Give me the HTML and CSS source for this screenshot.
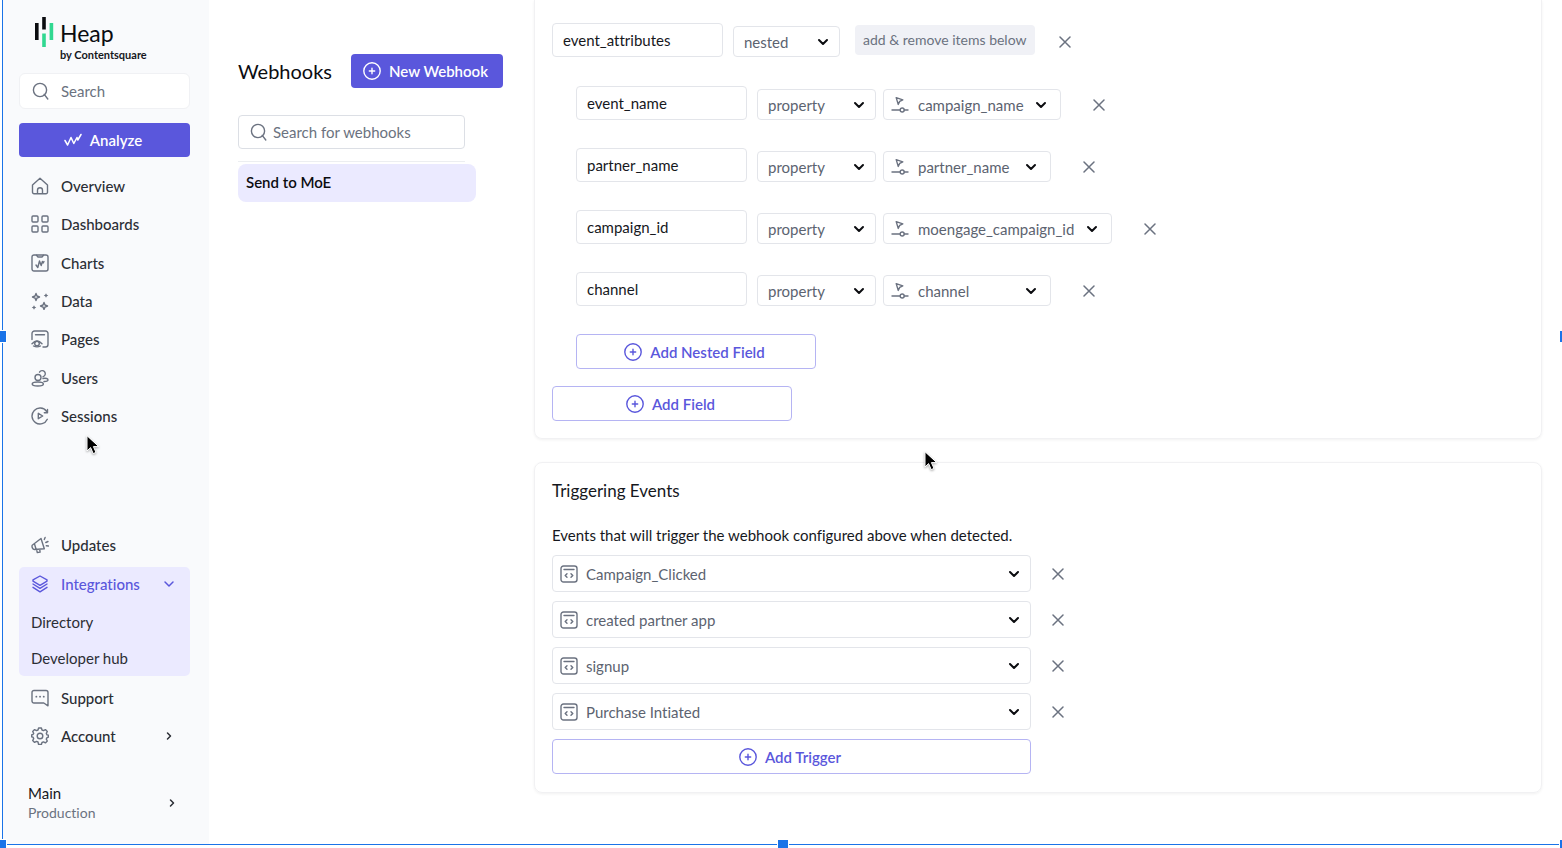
FILE: index.html
```html
<!DOCTYPE html>
<html lang="en">
<head>
<meta charset="utf-8">
<meta name="viewport" content="width=device-width, initial-scale=1">
<title>Heap – Webhooks</title>
<link rel="stylesheet" href="styles.css">
</head>
<body>
<svg class="sprite" aria-hidden="true">
  <symbol id="search" viewBox="0 0 18 18"><circle cx="8" cy="8" r="6.6"/><path d="M12.2 12.4 15.8 17"/></symbol>
  <symbol id="plus" viewBox="0 0 18 18"><circle cx="9" cy="9" r="8.2"/><path d="M9 6.300v5.400M6.300 9h5.400"/></symbol>
  <symbol id="chevron" viewBox="0 0 12 12"><path d="m2 4 4 4 4-4"/></symbol>
  <symbol id="chevron-right" viewBox="0 0 12 12"><path d="m4.500 3 3 3-3 3"/></symbol>
  <symbol id="close" viewBox="0 0 12 12"><path d="m1 1 10 10M11 1 1 11"/></symbol>
  <symbol id="property" viewBox="0 0 18 18"><path d="m5.200 1.600 6.600 2.200-3.100 1.600-1.500 3zM1 14h8.200M13.200 14h3.800"/><circle cx="11.200" cy="14" r="2"/></symbol>
  <symbol id="code" viewBox="0 0 18 18"><rect x="1" y="1" width="16" height="16" rx="2.500"/><path d="M4 4.500h10M7 8.700 5.200 10.500 7 12.300M11 8.700l1.800 1.800-1.800 1.800"/></symbol>
  <symbol id="pointer" viewBox="0 0 14 20"><path d="M1 1v15l3.600-3.400 2.600 6 2.800-1.200-2.600-5.800h5z"/></symbol>
</svg>

<div class="app">
  <aside class="sidebar">
    <div class="brand">
      <svg class="brand-mark" viewBox="0 0 20 32" aria-hidden="true"><path d="M1 7h3.600v17H1zM8.200 1h3.600v12.500H8.200z" fill="#0b0c10"/><path d="M8.200 17.500h3.600V31H8.200zM15.600 7h3.600v17h-3.600z" fill="#31d891"/></svg>
      <div class="brand-text"><span class="brand-name">Heap</span><span class="brand-by">by Contentsquare</span></div>
    </div>
    <label class="side-search"><svg class="icon"><use href="#search"/></svg><input type="search" placeholder="Search" aria-label="Search"></label>
    <button class="btn btn-primary analyze" type="button"><svg class="icon-analyze" viewBox="0 0 18 14" aria-hidden="true"><path d="m1 7.500 2.600 4.500L7 4.500l2.800 6L13 4.500l.8 2.500L17 1.500"/></svg>Analyze</button>

    <nav class="nav nav-main" aria-label="Main">
      <a class="nav-link" href="#overview"><svg class="icon" viewBox="0 0 18 18"><path d="M1.500 8 9 1.200 16.500 8v7.300a1.500 1.500 0 0 1-1.500 1.500H3a1.500 1.500 0 0 1-1.500-1.500zM6.500 16.800v-3.500a2.500 2.500 0 0 1 5 0v3.500"/></svg>Overview</a>
      <a class="nav-link" href="#dashboards"><svg class="icon" viewBox="0 0 18 18"><rect x="1" y="1" width="6" height="6" rx="1"/><rect x="11" y="1" width="6" height="6" rx="1"/><rect x="1" y="11" width="6" height="6" rx="1"/><rect x="11" y="11" width="6" height="6" rx="1"/></svg>Dashboards</a>
      <a class="nav-link" href="#charts"><svg class="icon" viewBox="0 0 18 18"><rect x="1" y="1" width="16" height="16" rx="2"/><path d="M5.500 1.200 7 3h4l1.500-1.800M5 11l1.800 2.500L8.500 7l1.700 4.500 1.200-4 .8 1.500L13 7.500"/></svg>Charts</a>
      <a class="nav-link" href="#data"><svg class="icon" viewBox="0 0 18 18"><path d="M5 1.500 6 4l2.500 1L6 6 5 8.500 4 6 1.500 5 4 4zM13 10.500l1 2.500 2.500 1-2.500 1-1 2.500-1-2.500-2.500-1 2.500-1z"/><path class="filled" d="m15 1.200.8 1.500 1.500.8-1.500.8-.8 1.500-.8-1.500-1.500-.8 1.500-.8zM3 13.200l.8 1.500 1.500.8-1.500.8-.8 1.500-.8-1.500-1.500-.8 1.500-.8z"/></svg>Data</a>
      <a class="nav-link" href="#pages"><svg class="icon" viewBox="0 0 18 18"><path d="M1 9.500V3.500A2.500 2.500 0 0 1 3.500 1h11A2.500 2.500 0 0 1 17 3.500v11a2.500 2.500 0 0 1-2.500 2.500H12M4.500 4.800h9M1 13.800q5-5.500 10 0M2.500 16q3.500 1.800 7 0"/><circle cx="6" cy="13.500" r="2.300"/></svg>Pages</a>
      <a class="nav-link" href="#users"><svg class="icon" viewBox="0 0 18 18"><circle cx="7" cy="8.500" r="3"/><path d="M8.500 3.200a3.100 3.100 0 1 1 3.600 4.500M12 9.500c3-.6 5 .2 5 1.500 0 1-1.500 1.600-4 1.500"/><ellipse cx="6.800" cy="15" rx="5.600" ry="2"/></svg>Users</a>
      <a class="nav-link" href="#sessions"><svg class="icon" viewBox="0 0 18 18"><path d="M15.500 4.300A8 8 0 1 0 16.300 12.300M16.500 2.500v3.200h-3.200M7.300 6.300v5.400l4.400-2.700z"/></svg>Sessions</a>
    </nav>

    <nav class="nav nav-more" aria-label="More">
      <a class="nav-link" href="#updates"><svg class="icon" viewBox="0 0 18 18"><path d="M1.200 9.200 10 2.500l3.300 10.300-9.800.7C1.500 13.300.6 10.700 1.200 9.200zM5.500 13.400l.8 3.100 2.800-.4-.4-2.900M3.500 8l1.500 5M13.300 3.500l.8-2M14.800 6.500l2.200-1M15.300 9.800l2.200.2"/></svg>Updates</a>
      <div class="nav-group">
        <a class="nav-link active" href="#integrations"><svg class="icon" viewBox="0 0 18 18"><path d="m9 1 7 3.800v1.400L9 10.300 2 6.200V4.800zM2 9l7 4.300L16 9M2 12.300l7 4.500 7-4.500"/></svg>Integrations<svg class="icon-sm caret"><use href="#chevron"/></svg></a>
        <a class="sub-link" href="#directory">Directory</a>
        <a class="sub-link" href="#developer-hub">Developer hub</a>
      </div>
      <a class="nav-link" href="#support"><svg class="icon" viewBox="0 0 18 18"><path d="M3 1.500h12a2 2 0 0 1 2 2v13.300L12.800 14H3a2 2 0 0 1-2-2V3.500a2 2 0 0 1 2-2z"/><path class="dots" d="M5.300 7.700h.1M9 7.700h.1M12.700 7.700h.1"/></svg>Support</a>
      <a class="nav-link" href="#account"><svg class="icon" viewBox="0 0 18 18"><circle cx="9" cy="9" r="2.800"/><path d="m7.600 1h2.800l.6 2 1.500.6 1.900-1 1.900 1.900-1 1.900.7 1.500 1.500.3v1.800l-1.500.6-.7 1.500 1 1.900-1.900 1.900-1.900-1-1.500.6-.6 2H7.600L7 15l-1.500-.6-1.900 1-1.900-1.900 1-1.900L2 10.100l-1.500-.3V8L2 7.500l.7-1.200-1-1.800 1.900-1.900 1.900 1L7 3z"/></svg>Account<svg class="icon-sm caret"><use href="#chevron-right"/></svg></a>
    </nav>

    <button class="env" type="button"><span class="env-text"><span>Main</span><span class="env-kind">Production</span></span><svg class="icon-sm"><use href="#chevron-right"/></svg></button>
  </aside>

  <section class="list-panel">
    <div class="list-head"><h1>Webhooks</h1><button class="btn btn-primary" type="button"><svg class="icon"><use href="#plus"/></svg>New Webhook</button></div>
    <div class="list-filter"><label class="list-search"><svg class="icon"><use href="#search"/></svg><input type="search" placeholder="Search for webhooks" aria-label="Search for webhooks"></label></div>
    <a class="list-item" href="#send-to-moe">Send to MoE</a>
  </section>

  <main class="detail">
    <section class="card card-fields">
      <div class="row">
        <input class="field" value="event_attributes" aria-label="Field name">
        <span class="select select-type"><select aria-label="Field type"><option>nested</option></select><svg class="icon-sm"><use href="#chevron"/></svg></span>
        <span class="hint">add &amp; remove items below</span>
        <button class="remove remove-parent" type="button" aria-label="Remove event_attributes"><svg class="icon-sm"><use href="#close"/></svg></button>
      </div>
      <div class="nested">
        <div class="row">
          <input class="field" value="event_name" aria-label="Field name">
          <span class="select select-kind"><select aria-label="Field type"><option>property</option></select><svg class="icon-sm"><use href="#chevron"/></svg></span>
          <span class="select select-value value-md"><svg class="icon lead"><use href="#property"/></svg><select aria-label="Property"><option>campaign_name</option></select><svg class="icon-sm"><use href="#chevron"/></svg></span>
          <button class="remove" type="button" aria-label="Remove event_name"><svg class="icon-sm"><use href="#close"/></svg></button>
        </div>
        <div class="row">
          <input class="field" value="partner_name" aria-label="Field name">
          <span class="select select-kind"><select aria-label="Field type"><option>property</option></select><svg class="icon-sm"><use href="#chevron"/></svg></span>
          <span class="select select-value"><svg class="icon lead"><use href="#property"/></svg><select aria-label="Property"><option>partner_name</option></select><svg class="icon-sm"><use href="#chevron"/></svg></span>
          <button class="remove" type="button" aria-label="Remove partner_name"><svg class="icon-sm"><use href="#close"/></svg></button>
        </div>
        <div class="row">
          <input class="field" value="campaign_id" aria-label="Field name">
          <span class="select select-kind"><select aria-label="Field type"><option>property</option></select><svg class="icon-sm"><use href="#chevron"/></svg></span>
          <span class="select select-value value-lg"><svg class="icon lead"><use href="#property"/></svg><select aria-label="Property"><option>moengage_campaign_id</option></select><svg class="icon-sm"><use href="#chevron"/></svg></span>
          <button class="remove" type="button" aria-label="Remove campaign_id"><svg class="icon-sm"><use href="#close"/></svg></button>
        </div>
        <div class="row">
          <input class="field" value="channel" aria-label="Field name">
          <span class="select select-kind"><select aria-label="Field type"><option>property</option></select><svg class="icon-sm"><use href="#chevron"/></svg></span>
          <span class="select select-value"><svg class="icon lead"><use href="#property"/></svg><select aria-label="Property"><option>channel</option></select><svg class="icon-sm"><use href="#chevron"/></svg></span>
          <button class="remove" type="button" aria-label="Remove channel"><svg class="icon-sm"><use href="#close"/></svg></button>
        </div>
        <button class="btn btn-outline" type="button"><svg class="icon"><use href="#plus"/></svg>Add Nested Field</button>
      </div>
      <button class="btn btn-outline" type="button"><svg class="icon"><use href="#plus"/></svg>Add Field</button>
    </section>

    <section class="card card-triggers">
      <h2>Triggering Events</h2>
      <p>Events that will trigger the webhook configured above when detected.</p>
      <div class="triggers">
        <div class="trigger"><span class="select select-event"><svg class="icon lead"><use href="#code"/></svg><select aria-label="Event 1"><option>Campaign_Clicked</option></select><svg class="icon-sm"><use href="#chevron"/></svg></span><button class="remove" type="button" aria-label="Remove Campaign_Clicked"><svg class="icon-sm"><use href="#close"/></svg></button></div>
        <div class="trigger"><span class="select select-event"><svg class="icon lead"><use href="#code"/></svg><select aria-label="Event 2"><option>created partner app</option></select><svg class="icon-sm"><use href="#chevron"/></svg></span><button class="remove" type="button" aria-label="Remove created partner app"><svg class="icon-sm"><use href="#close"/></svg></button></div>
        <div class="trigger"><span class="select select-event"><svg class="icon lead"><use href="#code"/></svg><select aria-label="Event 3"><option>signup</option></select><svg class="icon-sm"><use href="#chevron"/></svg></span><button class="remove" type="button" aria-label="Remove signup"><svg class="icon-sm"><use href="#close"/></svg></button></div>
        <div class="trigger"><span class="select select-event"><svg class="icon lead"><use href="#code"/></svg><select aria-label="Event 4"><option>Purchase Intiated</option></select><svg class="icon-sm"><use href="#chevron"/></svg></span><button class="remove" type="button" aria-label="Remove Purchase Intiated"><svg class="icon-sm"><use href="#close"/></svg></button></div>
        <button class="btn btn-outline btn-wide" type="button"><svg class="icon"><use href="#plus"/></svg>Add Trigger</button>
      </div>
    </section>
  </main>
</div>

<div class="frame" aria-hidden="true"><i class="handle west"></i><i class="handle east"></i><i class="handle south-west"></i><i class="handle south"></i><i class="handle south-east"></i></div>
<svg class="cursor cursor-nav" aria-hidden="true"><use href="#pointer"/></svg>
<svg class="cursor cursor-main" aria-hidden="true"><use href="#pointer"/></svg>
</body>
</html>
```
FILE: styles.css
```css
*, *::before, *::after { box-sizing: border-box; }

:root {
  --accent: #5a57dc;
  --accent-soft: #ebeaff;
  --ink: #16181d;
  --text: #2b2e35;
  --muted: #6b7280;
  --line: #e3e5ea;
  --blue: #1a73e8;
}

body {
  margin: 0;
  position: relative;
  min-height: 100vh;
  overflow: hidden;
  background: #fff;
  color: var(--text);
  font: 15px/20px Lato, "Open Sans", sans-serif;
  font-variant-ligatures: none;
}

h1, h2, p { margin: 0; font-weight: 400; color: var(--ink); }
button, input, select { font: inherit; font-variant-ligatures: none; color: inherit; margin: 0; }
button { cursor: pointer; }
a { color: inherit; text-decoration: none; }
input::placeholder { color: var(--muted); opacity: 1; }

.sprite { position: absolute; width: 0; height: 0; }
svg { fill: none; stroke: currentColor; stroke-linecap: round; stroke-linejoin: round; flex: none; }
.icon { width: 18px; height: 18px; stroke-width: 1.400; }
.icon-sm { width: 12px; height: 12px; stroke-width: 1.500; }
.filled { fill: currentColor; stroke: none; }
.dots { stroke-width: 1.800; }

.app { display: flex; min-height: 100vh; padding: 0 20px 4px 3px; }

/* Sidebar */
.sidebar {
  flex: none;
  display: flex;
  flex-direction: column;
  width: 206px;
  padding: 16px 19px 21px 16px;
  background: #f9fafc;
}
.brand { display: flex; gap: 6px; padding-left: 15px; }
.brand-mark { width: 20px; height: 32px; stroke: none; }
.brand-text { display: flex; flex-direction: column; padding-top: 5px; }
.brand-name { font-size: 23px; line-height: 24px; color: #0b0c10; }
.brand-by { font-size: 11px; line-height: 20px; font-weight: 700; color: var(--ink); }
.side-search, .list-search { display: flex; align-items: center; background: #fff; }
.side-search input, .list-search input { flex: 1; min-width: 0; padding: 0; border: 0; outline: 0; background: none; }
.side-search {
  gap: 11px;
  height: 36px;
  margin-top: 8px;
  padding: 0 12px;
  border: 1px solid #f0f1f4;
  border-radius: 6px;
  color: var(--muted);
}
.analyze { width: 100%; margin: 14px 0 10px; }
.icon-analyze { width: 18px; height: 14px; stroke-width: 1.500; }

.nav { display: flex; flex-direction: column; font-weight: 500; }
.nav-main { height: 268px; }
.nav-main .nav-link { flex: 1; }
.nav-more { margin-top: auto; }
.nav-link { display: flex; align-items: center; gap: 12px; min-height: 38px; padding: 0 15px 0 12px; }
.nav-link > .icon { color: var(--muted); }
.nav-link .caret { margin-left: auto; }
.nav-group { margin: 3px 0; border-radius: 5px; background: var(--accent-soft); }
.nav-group .nav-link { min-height: 34px; margin-bottom: 3px; }
.nav-group .active, .nav-group .active .icon { color: var(--accent); }
.sub-link { display: block; padding: 8px 12px; font-weight: 400; }
.env {
  display: flex;
  align-items: center;
  justify-content: space-between;
  margin-top: 28px;
  padding: 0 12px 0 9px;
  border: 0;
  background: none;
  text-align: left;
}
.env-text { display: flex; flex-direction: column; color: var(--ink); }
.env-text .env-kind { font-size: 14px; color: var(--muted); }

/* Buttons */
.btn {
  display: flex;
  align-items: center;
  justify-content: center;
  gap: 8px;
  height: 34px;
  padding: 0 14px 0 11px;
  border: 1px solid transparent;
  border-radius: 4px;
  font-weight: 600;
}
.btn-primary { background: var(--accent); color: #fff; }
.btn-outline { width: 240px; height: 35px; background: #fff; border-color: #b5b4f3; color: var(--accent); }
.btn-wide { width: 100%; }

/* Webhook list */
.list-panel { flex: none; width: 325px; padding: 54px 31px 0 29px; }
.list-head { display: flex; align-items: center; justify-content: space-between; }
h1 { font-size: 20px; line-height: 24px; color: #0b0c10; }
.list-filter { margin: 27px 38px 2px 0; padding-bottom: 12px; border-bottom: 1px solid #eceef1; }
.list-search { gap: 5px; height: 34px; padding: 0 11px; border: 1px solid #dcdfe5; border-radius: 4px; color: var(--muted); }
.list-item { display: block; margin-right: 27px; padding: 8px 8px 10px; border-radius: 8px; background: var(--accent-soft); color: #0b0c10; font-weight: 600; }

/* Detail cards */
.detail { flex: 1; min-width: 0; display: flex; flex-direction: column; gap: 23px; }
.card { padding: 18px 17px; border: 1px solid #f1f1f3; border-radius: 8px; box-shadow: 0 1px 3px rgba(0, 0, 0, .06); }
.card-fields { padding-top: 23px; padding-bottom: 17px; border-top: 0; border-radius: 0 0 8px 8px; }
.row { display: flex; align-items: flex-end; }
.nested { display: flex; flex-direction: column; gap: 28px; margin: 29px 0 17px; padding-left: 24px; }
.field { width: 171px; height: 34px; padding: 0 10px; border: 1px solid var(--line); border-radius: 4px; background: #fff; color: var(--ink); }

.select { position: relative; display: flex; }
.select select {
  width: 100%;
  height: 31px;
  padding: 0 30px 0 10px;
  appearance: none;
  border: 1px solid var(--line);
  border-radius: 4px;
  background: #fff;
  color: #5c6370;
}
.select svg { position: absolute; right: 11px; top: 0; bottom: 0; margin: auto 0; color: #0b0c10; stroke-width: 2; pointer-events: none; }
.select .lead { left: 8px; right: auto; color: var(--muted); stroke-width: 1.400; }
.select-type { width: 107px; margin-left: 10px; }
.select-kind { width: 119px; margin-left: 10px; }
.select-value { width: 168px; margin-left: 7px; }
.select-value select { padding-left: 34px; }
.select-value > .icon-sm { right: 14px; }
.value-md { width: 178px; }
.value-lg { width: 229px; }
.hint { margin: 0 0 2px 15px; padding: 5px 8px; border-radius: 4px; background: #f0f1f6; color: var(--muted); font-size: 14px; }
.remove { display: flex; align-items: center; justify-content: center; width: 24px; height: 31px; margin-left: 26px; padding: 0; border: 0; background: none; color: var(--muted); }
.remove-parent { margin-left: 18px; }
.remove svg { stroke-width: 1.500; }

h2 { font-size: 17px; line-height: 20px; }
.card-triggers p { margin: 24px 0 10px; }
.triggers { display: flex; flex-direction: column; gap: 9px; width: 479px; }
.trigger { display: flex; align-items: center; }
.select-event { flex: none; width: 100%; }
.select-event select { height: 37px; padding-left: 33px; }
.trigger .remove { flex: none; margin-left: 15px; }

/* Selection outline around the whole view */
.frame { position: absolute; inset: 0 0 3px 2px; border: solid var(--blue); border-width: 0 0 1px 1px; pointer-events: none; }
.handle { position: absolute; width: 12px; height: 13px; border: 1px solid #fff; background: var(--blue); }
.west, .east { top: 330px; }
.west, .south-west { left: -8px; }
.east, .south-east { right: -9px; }
.south-west, .south, .south-east { bottom: -8px; }
.south { left: calc(50% - 6px); }

.cursor { position: absolute; width: 14px; height: 20px; fill: #000; stroke: #fff; stroke-width: 1; filter: drop-shadow(0 1px 1px rgba(0, 0, 0, .35)); }
.cursor-nav { left: 86px; top: 435px; }
.cursor-main { left: 924px; top: 451px; }
```
